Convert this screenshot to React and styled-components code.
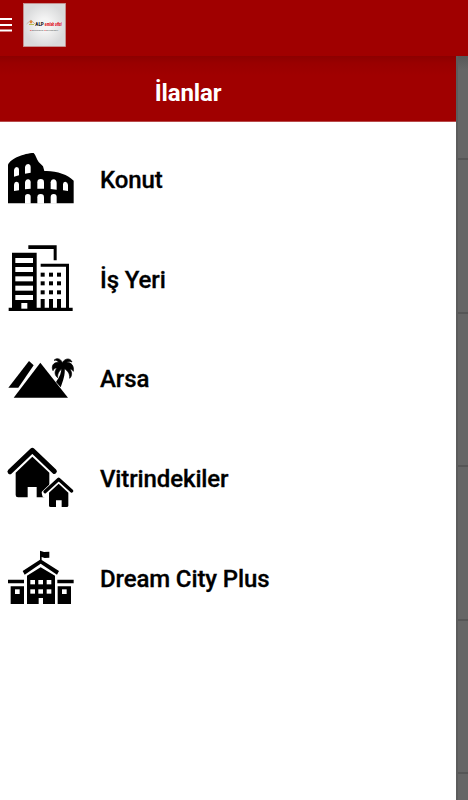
import React from "react";
import styled, { createGlobalStyle } from "styled-components";

const GlobalStyle = createGlobalStyle`
  * { box-sizing: border-box; }
  body { margin: 0; background: #fff; font-family: Roboto, "Liberation Sans", sans-serif; }
`;

const Screen = styled.div`
  width: 468px;
  height: 800px;
  overflow: hidden;
  display: flex;
  flex-direction: column;
  background: #666;
`;

const AppBar = styled.header`
  height: 56px;
  flex: none;
  display: flex;
  align-items: flex-start;
  background: #a00000;
`;

const MenuButton = styled.button`
  width: 23px;
  height: 50px;
  padding: 0;
  border: 0;
  background: none;
  display: block;
  svg { display: block; }
`;

const Logo = styled.svg`
  display: block;
  margin-top: 3px;
`;

const Body = styled.div`
  flex: 1;
  min-height: 0;
  display: flex;
`;

const Drawer = styled.nav`
  width: 456px;
  display: flex;
  flex-direction: column;
  background: #fff;
`;

const DrawerHeader = styled.h1`
  height: 66px;
  margin: 0 0 8.17px;
  padding: 8px 80px 0 0;
  text-align: center;
  line-height: 58px;
  font-size: 24px;
  font-weight: 700;
  letter-spacing: -0.15px;
  color: #fff;
  background: linear-gradient(#8c0000, #990000 7px, #a00000 20px);
  border-bottom: 1px solid #b84a4a;
`;

const MenuRow = styled.a`
  height: 99.67px;
  padding-left: 8px;
  display: flex;
  align-items: center;
  gap: 26px;
  font-size: 24px;
  font-weight: 500;
  letter-spacing: -0.12px;
  -webkit-text-stroke: 0.3px #000;
  color: #000;
`;

const RowIcon = styled.svg`
  width: 66px;
  height: 66px;
  flex: none;
  display: block;
  overflow: visible;
`;

const Backdrop = styled.div`
  flex: 1;
  display: flex;
  flex-direction: column;
  border-left: 2px solid #5c5c5c;
  background: linear-gradient(#585858, #666 14px);
`;

const BackdropCard = styled.div`
  flex: none;
  height: ${(p) => p.$height}px;
  border-bottom: 2px solid #565656;
`;

const arch = (x, y, w, h) =>
  `M${x} ${y + h}V${y + w / 2}Q${x} ${y} ${x + w / 2} ${y}T${x + w} ${y + w / 2}V${y + h}Z`;

const Colosseum = () => (
  <RowIcon viewBox="24 6 198 198">
    <path d="M24 175V60C30 41 72 25 101 24C107 30 110 43 116 51L129 64L133 78C165 76 204 88 221 107V175Z" />
    <g fill="#fff">
      <path d="M42 95V74Q44 67 50 66Q57 67 57 73V91Z" />
      <path d="M75 86V65Q77 57 84 57Q92 58 92 66V83Z" />
      <path d="M42 138V119Q43 110 50 110Q57 111 57 118V136Z" />
      <path d="M75 133V112Q77 103 84 103Q92 104 92 112V131Z" />
      <path d={arch(112, 102, 20, 29)} />
      <path d="M152 132V112Q153 103 161 103Q169 104 170 113V134Z" />
      <path d="M189 136V117Q190 110 196 110Q203 111 204 119V138Z" />
      <path d={arch(75, 147, 17, 29)} />
      <path d={arch(112, 147, 20, 29)} />
      <path d={arch(152, 147, 18, 29)} />
    </g>
  </RowIcon>
);

const Offices = () => (
  <RowIcon viewBox="24 21 198 198">
    <path d="M85 16H170V61H161V27H85Z" />
    <path d="M36 38H110V203H218V213H26V203H36Z" />
    <path d="M122 71H207V205H198V80H122Z" />
    <g fill="#fff">
      {[54, 81, 109, 137, 165].map((y) => (
        <rect key={y} x="46" y={y} width="53" height="15" />
      ))}
      <rect x="64" y="189" width="18" height="17" />
    </g>
    {[98, 124, 151].map((y) =>
      [122, 147, 171].map((x) => <rect key={`${x}-${y}`} x={x} y={y} width="12" height="12" />)
    )}
    {[122, 147, 171].map((x) => (
      <rect key={x} x={x} y="177" width="12" height="28" />
    ))}
  </RowIcon>
);

const PyramidsPalm = () => (
  <RowIcon viewBox="24 -12 198 198">
    <path d="M87 33L101 46L55 113H25Z" />
    <path d="M121 38L204 143H41Z" />
    <path d="M184 53H194C196 76 189 91 182 112L168 96C179 81 185 66 184 53Z" />
    <path d="M187 38C181 23 168 24 162 31C171 29 173 33 176 37C160 36 153 49 159 62C162 55 166 54 171 54C163 63 163 76 173 83C172 70 178 62 188 54C202 59 210 70 209 85C216 79 217 68 210 57C216 58 218 61 220 64C223 47 213 37 200 37C204 33 211 34 216 36C211 23 195 24 187 38Z" stroke="#000" strokeWidth="2" />
  </RowIcon>
);

const Houses = () => (
  <RowIcon viewBox="24 12 198 198">
    <path
      d="M30 89L97 25L163 88"
      fill="none"
      stroke="#000"
      strokeWidth="15"
      strokeLinejoin="round"
      strokeLinecap="round"
    />
    <path d="M47 92L97 44L148 92V160Q148 166 141 166H110V135H83V166H54Q47 166 47 159Z" />
    <path d="M131 152L176 109L215 149V170L203 171V195H145V165L133 161Z" fill="#fff" stroke="#fff" strokeWidth="12" strokeLinejoin="round" />
    <path
      d="M135 149L176 112L215 147"
      fill="none"
      stroke="#000"
      strokeWidth="10"
      strokeLinejoin="round"
      strokeLinecap="round"
    />
    <path d="M147 152L176 125L205 152V191Q205 195 200 195H185V175H168V195H152Q147 195 147 191Z" />
  </RowIcon>
);

const School = () => (
  <RowIcon viewBox="24 3 198 198">
    <path d="M120 17L132 21L148 20V38L134 39L125 36V45L177 78L171 89L122 56L74 89L68 78L120 44Z" />
    <path d="M81 92L122 67L165 92V177H129V159H116V177H81Z" />
    <path d="M24 104H72V115H24ZM172 104H221V115H172Z" />
    <path d="M32 124H72V177H32ZM173 124H213V177H173Z" />
    <g fill="#fff">
      {[105, 133].map((y) =>
        [91, 115, 140].map((x) => <rect key={`${x}-${y}`} x={x} y={y} width="14" height="13" />)
      )}
      <rect x="45" y="133" width="14" height="14" />
      <rect x="186" y="133" width="14" height="14" />
    </g>
  </RowIcon>
);

const items = [
  { label: "Konut", Icon: Colosseum },
  { label: "İş Yeri", Icon: Offices },
  { label: "Arsa", Icon: PyramidsPalm },
  { label: "Vitrindekiler", Icon: Houses },
  { label: "Dream City Plus", Icon: School },
];

const cards = [104, 154, 153, 154, 153];

const BrandLogo = () => (
  <Logo width="43" height="44" viewBox="0 0 43 44">
    <defs>
      <radialGradient id="paper">
        <stop offset="0.3" stopColor="#f4f4f4" />
        <stop offset="1" stopColor="#d9dadb" />
      </radialGradient>
    </defs>
    <rect x="0.5" y="0.5" width="42" height="43" fill="url(#paper)" stroke="#c79a9a" strokeWidth="0.8" />
    <path d="M3.5 21L8 17L12 21" fill="none" stroke="#c8b5a4" strokeWidth="1" />
    <circle cx="8" cy="19" r="1.4" fill="#e08a3c" />
    <path d="M6 21.5H11" stroke="#b4bf55" strokeWidth="1" />
    <text x="12.3" y="23.3" fontSize="4.8" fontWeight="900" fill="#222" textLength="8.5" lengthAdjust="spacingAndGlyphs">ALP</text>
    <text x="21.8" y="23.3" fontSize="4.8" fontWeight="900" fontStyle="italic" fill="#e0101c" textLength="17" lengthAdjust="spacingAndGlyphs">emlak ofisi</text>
    <text x="7" y="27.6" fontSize="2.5" fill="#555" textLength="28" lengthAdjust="spacingAndGlyphs">
      <tspan fill="#e0101c">D</tspan>anışmanlık <tspan fill="#e0101c">G</tspan>ayrimenkul
    </text>
  </Logo>
);

export default function App() {
  return (
    <>
      <GlobalStyle />
      <Screen>
        <AppBar>
          <MenuButton aria-label="Menu">
            <svg width="23" height="50" fill="#fff">
              <rect y="18" width="12" height="2" />
              <rect y="24" width="12" height="2" />
              <rect y="29.5" width="12" height="2" />
            </svg>
          </MenuButton>
          <BrandLogo />
        </AppBar>
        <Body>
          <Drawer>
            <DrawerHeader>İlanlar</DrawerHeader>
            {items.map(({ label, Icon }) => (
              <MenuRow key={label}>
                <Icon />
                <span>{label}</span>
              </MenuRow>
            ))}
          </Drawer>
          <Backdrop>
            {cards.map((height, i) => (
              <BackdropCard key={i} $height={height} />
            ))}
          </Backdrop>
        </Body>
      </Screen>
    </>
  );
}
